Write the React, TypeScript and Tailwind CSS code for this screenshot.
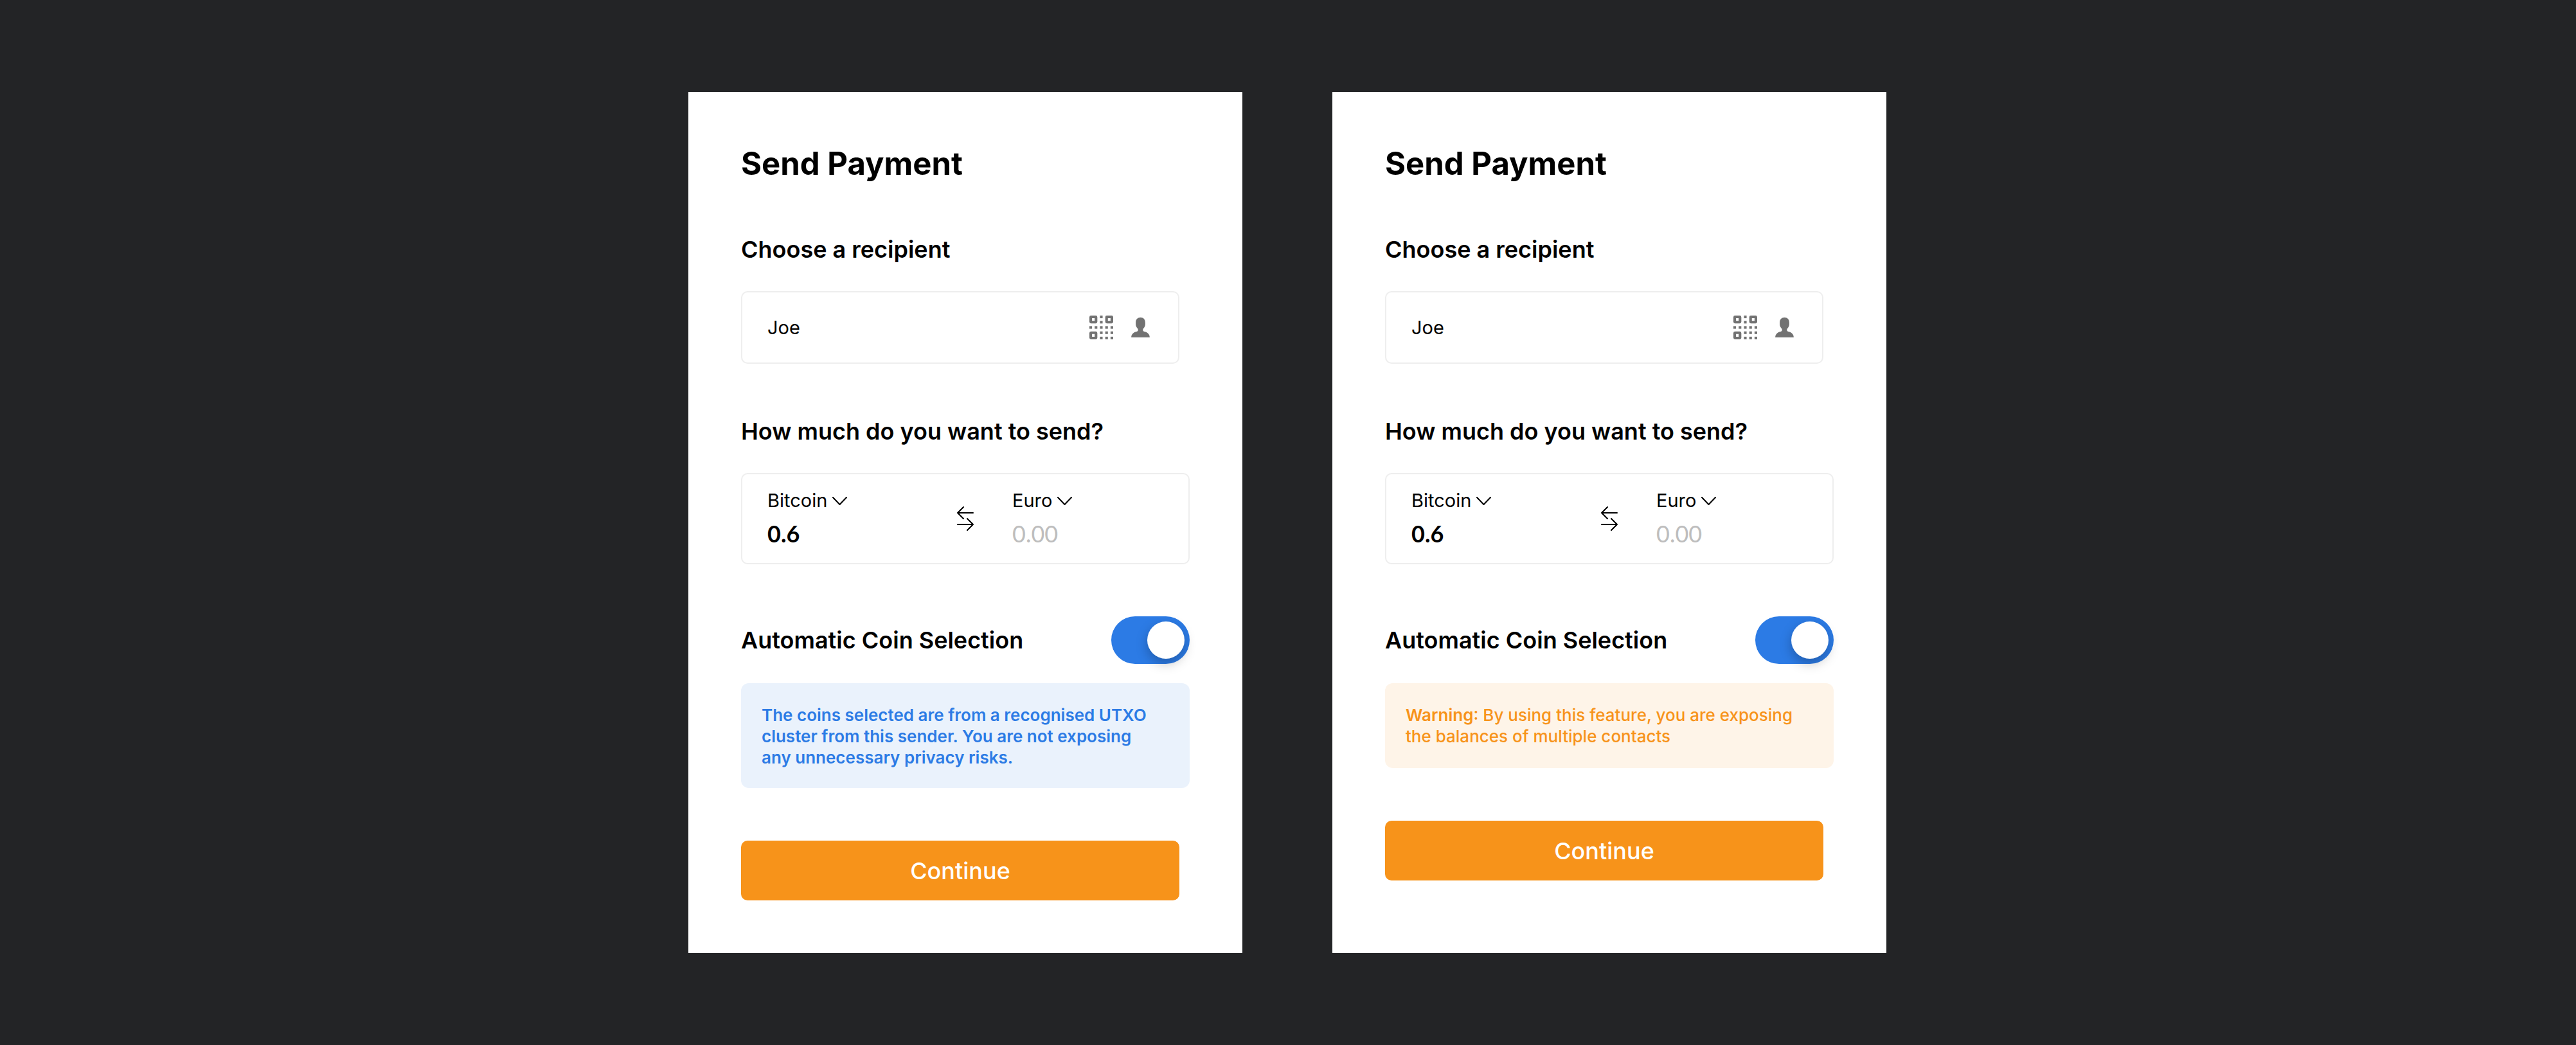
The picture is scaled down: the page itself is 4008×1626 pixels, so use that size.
import { useId, useState, type ReactNode } from 'react';

function QrIcon() {
  const dots = [
    [4, 0], [4, 2],
    [0, 4], [2, 4], [4, 4], [6, 4], [8, 4],
    [4, 6], [6, 6], [8, 6],
    [4, 8], [6, 8], [8, 8],
  ];
  const finders = [[0, 0], [6, 0], [0, 6]];
  return (
    <svg viewBox="0 0 9 9" className="size-[37px]" aria-hidden="true">
      {finders.map(([x, y]) => (
        <rect key={`f${x}${y}`} x={x + 0.5} y={y + 0.5} width="2" height="2" rx="0.1" fill="none" stroke="currentColor" strokeWidth="1" strokeLinejoin="round" />
      ))}
      {dots.map(([x, y]) => (
        <rect key={`d${x}${y}`} x={x} y={y} width="1" height="1" fill="currentColor" />
      ))}
    </svg>
  );
}

function PersonIcon() {
  return (
    <svg viewBox="0 0 87 94" className="h-[31px] w-[29px]" fill="currentColor" aria-hidden="true">
      <path d="M43.500 0C57 0 66 9 66 24V31C66 40 62 47 57 52C55 54 55 57 55 60C55 64 58 66 63 67C78 71 87 80 87 94H0C0 80 9 71 24 67C29 66 32 64 32 60C32 57 32 54 30 52C25 47 21 40 21 31V24C21 9 30 0 43.500 0Z" />
    </svg>
  );
}

function SwapIcon() {
  return (
    <svg viewBox="0 0 26 38" className="h-[38px] w-[26px]" fill="none" stroke="currentColor" strokeWidth="2" strokeLinecap="round" strokeLinejoin="round" aria-hidden="true">
      <path d="M25 10H1M10 1L1 10L10 19M1 28H25M16 19L25 28L16 37" />
    </svg>
  );
}

function ChevronIcon() {
  return (
    <svg viewBox="0 0 23 13" className="h-[13px] w-[23px]" fill="none" stroke="currentColor" strokeWidth="2" strokeLinecap="round" strokeLinejoin="round" aria-hidden="true">
      <path d="M1 1L11.500 12L22 1" />
    </svg>
  );
}

type AmountProps = { label: string; currency: string; options: string[]; amount?: string };

function AmountField({ label, currency, options, amount = '' }: AmountProps) {
  return (
    <div className="flex min-w-0 flex-col gap-3">
      <div className="flex items-center gap-2">
        <select
          aria-label={`${label} currency`}
          defaultValue={currency}
          className="appearance-none bg-transparent text-[29px] leading-[34px] outline-none [field-sizing:content]"
        >
          {options.map((o) => (
            <option key={o}>{o}</option>
          ))}
        </select>
        <ChevronIcon />
      </div>
      <input
        aria-label={`${label} amount`}
        inputMode="decimal"
        defaultValue={amount}
        placeholder="0.00"
        className="h-11 w-full bg-transparent font-['Lato',sans-serif] text-[36px] leading-[44px] font-bold outline-none placeholder:font-normal placeholder:text-[#bdbdbd]"
      />
    </div>
  );
}

type CardProps = { notice: ReactNode; noticeClass: string };

function PaymentCard({ notice, noticeClass }: CardProps) {
  const id = useId();
  const [auto, setAuto] = useState(true);
  return (
    <form className="w-full max-w-[862px] bg-white p-[82px] text-black" onSubmit={(e) => e.preventDefault()}>
      <h1 className="text-[49px] leading-[60px] font-bold">Send Payment</h1>

      <label htmlFor={`${id}-to`} className="mt-[81px] block text-[36px] leading-[44px] font-semibold">
        Choose a recipient
      </label>
      <div className="mt-[43px] mr-4 flex h-[113px] items-center rounded-[10px] border-2 border-[#eeeeee] pr-11 pl-[39px]">
        <input id={`${id}-to`} defaultValue="Joe" className="min-w-0 flex-1 bg-transparent text-[29px] leading-[34px] outline-none" />
        <div className="flex items-center gap-7 text-[#727272]">
          <button type="button" aria-label="Scan QR code">
            <QrIcon />
          </button>
          <button type="button" aria-label="Choose from contacts">
            <PersonIcon />
          </button>
        </div>
      </div>

      <h2 className="mt-[83px] text-[36px] leading-[44px] font-semibold">How much do you want to send?</h2>
      <div className="mt-[43px] grid grid-cols-[1fr_26px_1fr] items-center gap-x-[60px] rounded-[10px] border-2 border-[#eeeeee] px-[39px] py-6">
        <AmountField label="From" currency="Bitcoin" options={['Bitcoin', 'Euro']} amount="0.6" />
        <button type="button" aria-label="Swap currencies">
          <SwapIcon />
        </button>
        <AmountField label="To" currency="Euro" options={['Euro', 'Bitcoin']} />
      </div>

      <label className="mt-[81px] flex cursor-pointer items-center justify-between">
        <span className="text-[36px] leading-[44px] font-semibold">Automatic Coin Selection</span>
        <input type="checkbox" role="switch" checked={auto} onChange={(e) => setAuto(e.target.checked)} className="peer sr-only" />
        <span className="flex h-[74px] w-[122px] rounded-full bg-[#bdbdbd] p-2 peer-checked:justify-end peer-checked:bg-[#2c7be5]">
          <span className="size-[58px] rounded-full bg-white shadow-[0_7px_18px_rgba(0,0,0,0.25)]" />
        </span>
      </label>

      <p className={`mt-[30px] min-h-[132px] rounded-[12px] pt-[33px] pr-12 pb-[31px] pl-8 text-[26px] leading-[33px] ${noticeClass}`}>{notice}</p>

      <button type="submit" className="mt-[82px] block h-[93px] w-[calc(100%-16px)] rounded-[10px] bg-[#f7931a] text-[36px] leading-[44px] font-medium text-white">
        Continue
      </button>
    </form>
  );
}

export default function App() {
  return (
    <main className="flex min-h-screen items-center justify-center bg-[#232426] pr-0.5 font-['Inter',sans-serif]">
      <div className="flex w-full justify-center gap-[140px]">
        <PaymentCard
          noticeClass="bg-[#eaf2fc] font-semibold text-[#2c7be5]"
          notice="The coins selected are from a recognised UTXO cluster from this sender. You are not exposing any unnecessary privacy risks."
        />
        <PaymentCard
          noticeClass="bg-[#fef4e8] font-medium text-[#f7931a]"
          notice={
            <>
              <strong className="font-semibold">Warning</strong>: By using this feature, you are exposing the balances of multiple contacts
            </>
          }
        />
      </div>
    </main>
  );
}
